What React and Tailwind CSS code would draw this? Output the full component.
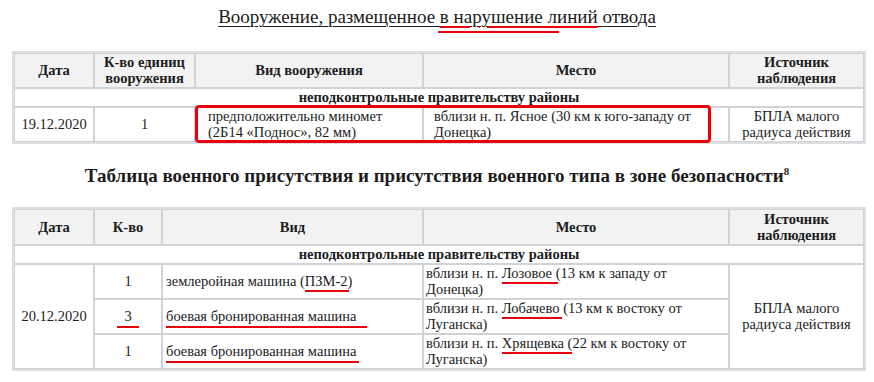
import React from 'react'

const Mark = ({ children, l = 0, r = 0, b = -3 }) => (
  <span className="relative">
    {children}
    <span
      className="absolute h-[2px] bg-[#e8000b]"
      style={{ left: l, right: r, bottom: b }}
    />
  </span>
)

const th = 'border border-[#cfd3d7] bg-[#f2f2f2] font-bold text-center align-middle leading-[16px] px-1'
const td = 'border border-[#cfd3d7] bg-white align-middle leading-[16px]'

const SubRow = () => (
  <tr>
    <td colSpan={5} className={`${td} font-bold text-center h-[19px] leading-[15px]`}>
      неподконтрольные правительству районы
    </td>
  </tr>
)

export default function App() {
  return (
    <div className="w-[874px] h-[382px] bg-white text-[#1c1c1c] text-[14.5px] [font-family:'Liberation_Serif',serif] overflow-hidden">
      <div className="pt-[5px] text-center">
        <h2 className="inline text-[19px] leading-[24px] underline underline-offset-[3px] decoration-1">
          Вооружение, размещенное{' '}
          <span className="relative">
            <span className="underline underline-offset-[3px] decoration-[#e8000b] decoration-2">в нарушение линий</span>
            <span className="absolute left-[-2px] w-[121px] bottom-[-6px] h-[2px] bg-[#e8000b]" />
          </span>
          {' '}отвода
        </h2>
      </div>

      <table className="mt-[21px] ml-[12px] w-[854px] table-fixed border-separate border-spacing-0 border-2 border-[#dcdfe2]">
        <colgroup>
          <col className="w-[80px]" />
          <col className="w-[101px]" />
          <col className="w-[228px]" />
          <col className="w-[306px]" />
          <col />
        </colgroup>
        <tbody>
          <tr>
            <th className={`${th} h-[35px]`}>Дата</th>
            <th className={th}>К-во единиц вооружения</th>
            <th className={th}>Вид вооружения</th>
            <th className={th}>Место</th>
            <th className={th}>Источник наблюдения</th>
          </tr>
          <SubRow />
          <tr>
            <td className={`${td} text-center h-[35px]`}>19.12.2020</td>
            <td className={`${td} text-center`}>1</td>
            <td className={`${td} pl-[12px] pr-1 relative`}>
              предположительно миномет (2Б14 «Поднос», 82 мм)
              <span className="absolute left-[-1px] top-[-3px] w-[516px] h-[38px] border-[3px] border-[#e8000b] rounded-[4px]" />
            </td>
            <td className={`${td} pl-[10px] pr-2`}>вблизи н. п. Ясное (30 км к юго-западу от Донецка)</td>
            <td className={`${td} text-center px-1`}>БПЛА малого радиуса действия</td>
          </tr>
        </tbody>
      </table>

      <h2 className="mt-[21px] text-center font-bold text-[19px] leading-[22px]">
        Таблица военного присутствия и присутствия военного типа в зоне безопасности
        <span className="relative top-[-7px] text-[11px] leading-none">8</span>
      </h2>

      <table className="mt-[20px] ml-[12px] w-[854px] table-fixed border-separate border-spacing-0 border-2 border-[#dcdfe2]">
        <colgroup>
          <col className="w-[80px]" />
          <col className="w-[68px]" />
          <col className="w-[261px]" />
          <col className="w-[306px]" />
          <col />
        </colgroup>
        <tbody>
          <tr>
            <th className={`${th} h-[36px]`}>Дата</th>
            <th className={th}>К-во</th>
            <th className={th}>Вид</th>
            <th className={th}>Место</th>
            <th className={th}>Источник наблюдения</th>
          </tr>
          <SubRow />
          <tr>
            <td rowSpan={3} className={`${td} text-center`}>20.12.2020</td>
            <td className={`${td} text-center h-[35px]`}>1</td>
            <td className={`${td} px-[3px]`}>
              землеройная машина (<Mark l={0} r={-1} b={-3}>ПЗМ-2</Mark>)
            </td>
            <td className={`${td} pl-[2px] pr-[40px]`}>
              вблизи н. п. <Mark l={0} r={-6} b={-3}>Лозовое</Mark> (13 км к западу от Донецка)
            </td>
            <td rowSpan={3} className={`${td} text-center px-1`}>БПЛА малого радиуса действия</td>
          </tr>
          <tr>
            <td className={`${td} text-center h-[35px]`}>
              <Mark l={-7} r={-7} b={-4}>3</Mark>
            </td>
            <td className={`${td} px-[3px]`}>
              <Mark l={0} r={-10} b={-4}>боевая бронированная машина</Mark>
            </td>
            <td className={`${td} pl-[2px] pr-[40px]`}>
              вблизи н. п. <Mark l={0} r={-2} b={-3}>Лобачево</Mark> (13 км к востоку от Луганска)
            </td>
          </tr>
          <tr>
            <td className={`${td} text-center h-[35px]`}>1</td>
            <td className={`${td} px-[3px]`}>
              <Mark l={0} r={-2} b={-4}>боевая бронированная машина</Mark>
            </td>
            <td className={`${td} pl-[2px] pr-[40px]`}>
              вблизи н. п. <Mark l={0} r={-8} b={-3}>Хрящевка</Mark> (22 км к востоку от Луганска)
            </td>
          </tr>
        </tbody>
      </table>
    </div>
  )
}
